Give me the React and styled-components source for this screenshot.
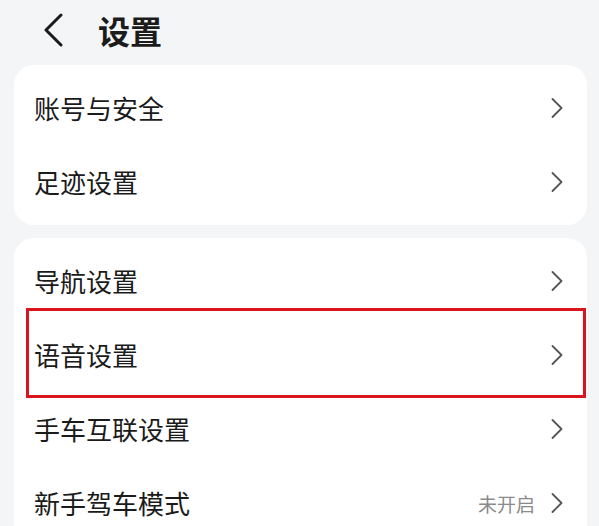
import styled, { createGlobalStyle } from 'styled-components';

const GlobalStyle = createGlobalStyle`
  html, body {
    margin: 0;
    padding: 0;
    background: #f4f5f7;
  }
  body {
    font-family: "Noto Sans CJK SC", "Noto Sans", sans-serif;
    color: #1b1b1b;
    overflow: hidden;
  }
`;

const groups = [
  [
    { id: 'account', label: '账号与安全' },
    { id: 'trace', label: '足迹设置' },
  ],
  [
    { id: 'nav', label: '导航设置' },
    { id: 'voice', label: '语音设置', marked: true },
    { id: 'car', label: '手车互联设置' },
    { id: 'novice', label: '新手驾车模式', value: '未开启' },
  ],
];

export default function App() {
  return (
    <Page>
      <GlobalStyle />
      <Header>
        <BackIcon viewBox="0 0 22 34" aria-hidden="true">
          <path d="M19 2 L4 17 L19 32" />
        </BackIcon>
        <Title>设置</Title>
      </Header>
      <Groups>
        {groups.map((items, i) => (
          <Card key={i}>
            {items.map((item) => (
              <SettingRow key={item.id} {...item} />
            ))}
          </Card>
        ))}
      </Groups>
    </Page>
  );
}

function SettingRow({ label, value, marked }) {
  return (
    <Row>
      <Label>{label}</Label>
      <Trailing>
        {value ? <Value>{value}</Value> : null}
        <Chevron viewBox="0 0 12 20" aria-hidden="true">
          <path d="M1.5 1 L10.5 10 L1.5 19" />
        </Chevron>
      </Trailing>
      {marked ? <Highlight /> : null}
    </Row>
  );
}

const Page = styled.div`
  padding: 0 12px 0 14px;
  height: 526px;
  box-sizing: border-box;
`;

const Header = styled.header`
  height: 60px;
  display: flex;
  align-items: center;
  padding-left: 28px;
  gap: 34px;
`;

const BackIcon = styled.svg`
  width: 22px;
  height: 34px;
  fill: none;
  stroke: #1b1b1b;
  stroke-width: 3;
  stroke-linecap: round;
  stroke-linejoin: round;
`;

const Title = styled.h1`
  margin: 0;
  font-size: 32px;
  font-weight: 700;
  line-height: 1;
`;

const Groups = styled.div`
  display: flex;
  flex-direction: column;
  gap: 13px;
  margin-top: 5px;
`;

const Card = styled.section`
  background: #ffffff;
  border-radius: 20px;
  padding: 6px 0;
`;

const Row = styled.div`
  position: relative;
  height: 74px;
  display: flex;
  align-items: center;
  justify-content: space-between;
  padding: 0 24px 0 20px;
`;

const Label = styled.span`
  font-size: 26px;
  line-height: 1;
  color: #1b1b1b;
`;

const Trailing = styled.div`
  display: flex;
  align-items: center;
  gap: 16px;
`;

const Value = styled.span`
  font-size: 19px;
  color: #8a8a8a;
`;

const Chevron = styled.svg`
  width: 12px;
  height: 20px;
  fill: none;
  stroke: #555555;
  stroke-width: 1.8;
  stroke-linecap: round;
  stroke-linejoin: round;
`;

const Highlight = styled.div`
  position: absolute;
  left: 12px;
  right: 1px;
  top: -10px;
  bottom: -6px;
  border: 3px solid #d9141c;
  pointer-events: none;
`;
